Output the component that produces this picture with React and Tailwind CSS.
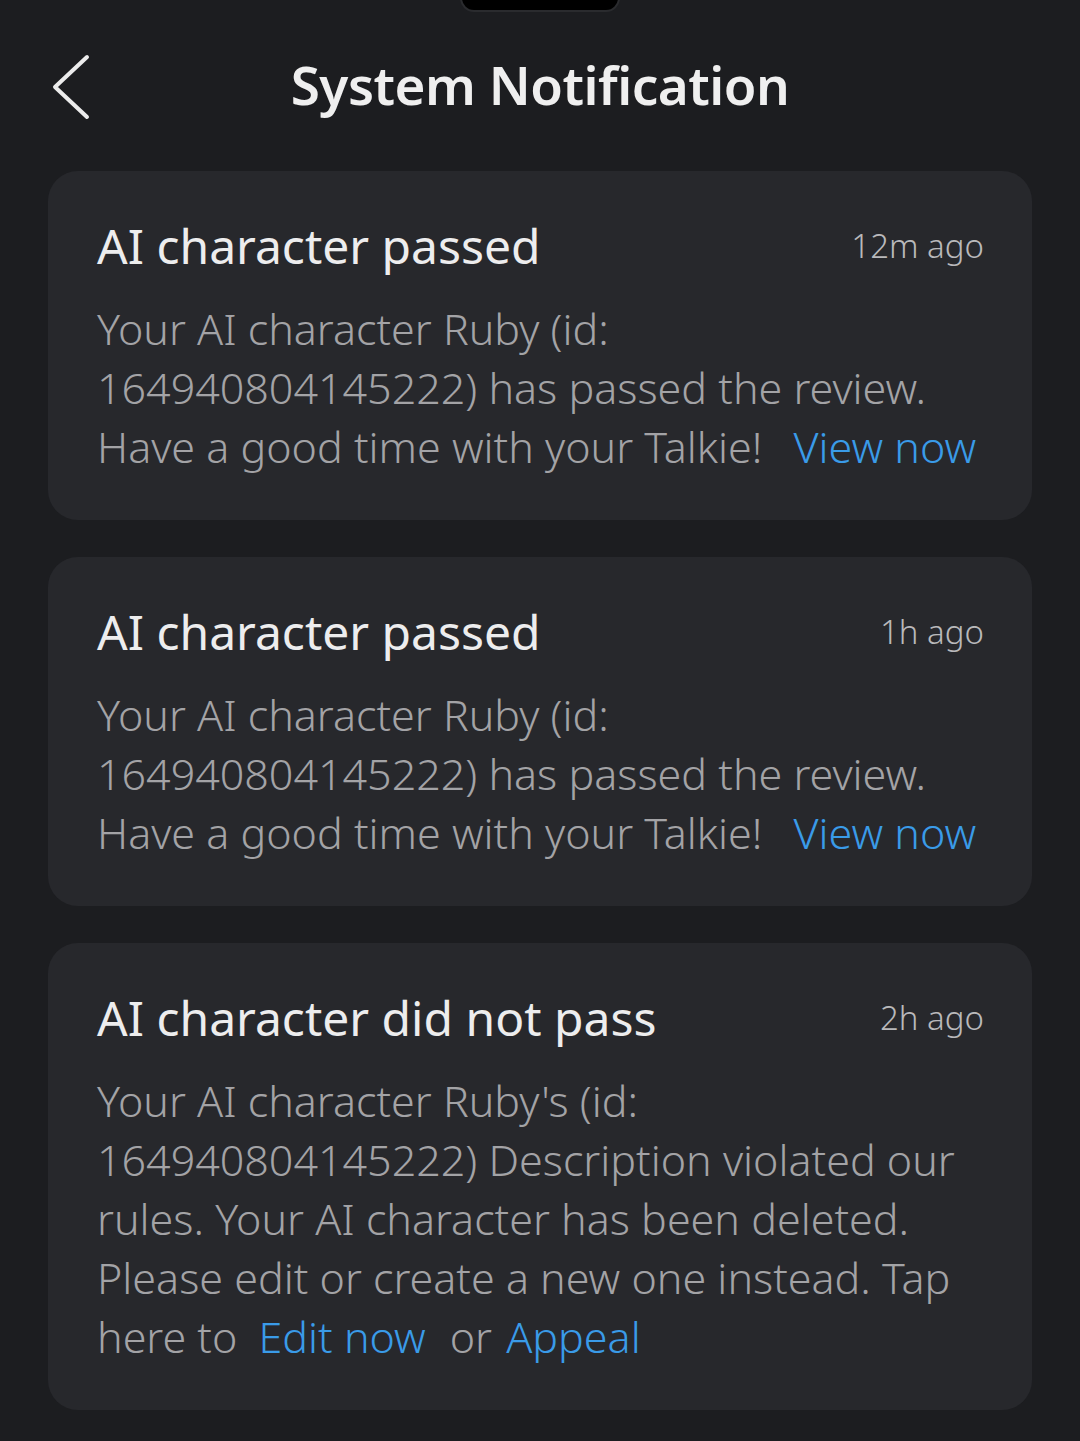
const Link = ({ children, className = "" }) => (
  <span className={`text-[#3a9be8] ${className}`}>{children}</span>
);

const notices = [
  {
    title: "AI character passed",
    time: "12m ago",
    lines: [
      "Your AI character Ruby (id:",
      "164940804145222) has passed the review.",
      <>
        Have a good time with your Talkie! <Link className="ml-[20px]">View now</Link>
      </>,
    ],
  },
  {
    title: "AI character passed",
    time: "1h ago",
    lines: [
      "Your AI character Ruby (id:",
      "164940804145222) has passed the review.",
      <>
        Have a good time with your Talkie! <Link className="ml-[20px]">View now</Link>
      </>,
    ],
  },
  {
    title: "AI character did not pass",
    time: "2h ago",
    lines: [
      "Your AI character Ruby's (id:",
      "164940804145222) Description violated our",
      "rules. Your AI character has been deleted.",
      "Please edit or create a new one instead. Tap",
      <>
        here to <Link className="ml-[10px]">Edit now</Link>
        <span className="ml-[24px]">or</span> <Link className="ml-[3px]">Appeal</Link>
      </>,
    ],
  },
];

function NoticeCard({ title, time, lines }) {
  return (
    <div className="bg-[#27282c] rounded-[30px] pl-[49px] pr-[48px] pt-[45px] pb-[44px]">
      <div className="flex items-center justify-between h-[60px]">
        <h2 className="text-[48px] text-[#ededee] leading-[60px] font-normal whitespace-nowrap">{title}</h2>
        <span className="text-[33px] text-[#b9b9bb] font-light whitespace-nowrap">{time}</span>
      </div>
      <div className="mt-[23px] text-[43px] leading-[59px] text-[#a3a3a6] font-light">
        {lines.map((l, i) => (
          <div key={i} className="whitespace-nowrap">
            {l}
          </div>
        ))}
      </div>
    </div>
  );
}

export default function App() {
  return (
    <div
      className="min-h-screen bg-[#1c1d20] relative"
      style={{ fontFamily: '"Noto Sans", Roboto, sans-serif' }}
    >
      <div className="absolute left-1/2 -translate-x-1/2 -top-[8px] w-[160px] h-[20px] bg-black rounded-b-[14px] border-2 border-[#2a2b2e]" />
      <header className="relative h-[171px] flex items-start justify-center pt-[50px]">
        <svg
          className="absolute left-[50px] top-[52px]"
          width="44"
          height="70"
          viewBox="0 0 44 70"
          fill="none"
          stroke="#ececec"
          strokeWidth="4"
          strokeLinecap="round"
          strokeLinejoin="round"
        >
          <polyline points="37,5 5,35 37,65" />
        </svg>
        <h1 className="text-[53px] font-semibold text-[#efefef] leading-[70px] tracking-[-0.5px]">
          System Notification
        </h1>
      </header>
      <main className="px-[48px] flex flex-col gap-[37px] pb-[30px]">
        {notices.map((n, i) => (
          <NoticeCard key={i} {...n} />
        ))}
      </main>
    </div>
  );
}
